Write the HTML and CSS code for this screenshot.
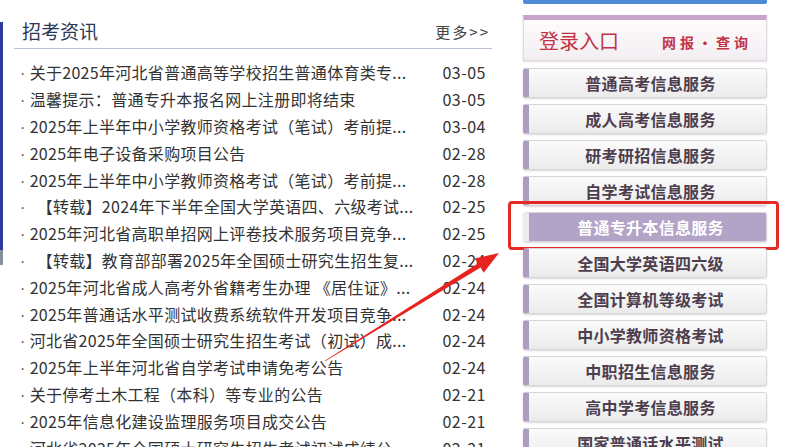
FILE: index.html
```html
<!DOCTYPE html>
<html lang="zh-CN">
<head>
<meta charset="UTF-8">
<meta name="viewport" content="width=device-width, initial-scale=1.0">
<title>招考资讯</title>
<link rel="stylesheet" href="styles.css">
</head>
<body>
<div class="page">
    <div class="edge"></div>

    <!-- 招考资讯 list -->
    <div class="news">
        <div class="news-head">
            <h2>招考资讯</h2>
            <a class="more" href="#">更多&gt;&gt;</a>
        </div>
        <ul class="news-list">
            <li><span class="title"><i>·</i>关于2025年河北省普通高等学校招生普通体育类专...</span><span class="date">03-05</span></li>
            <li><span class="title"><i>·</i>温馨提示：普通专升本报名网上注册即将结束</span><span class="date">03-05</span></li>
            <li><span class="title"><i>·</i>2025年上半年中小学教师资格考试（笔试）考前提...</span><span class="date">03-04</span></li>
            <li><span class="title"><i>·</i>2025年电子设备采购项目公告</span><span class="date">02-28</span></li>
            <li><span class="title"><i>·</i>2025年上半年中小学教师资格考试（笔试）考前提...</span><span class="date">02-28</span></li>
            <li><span class="title"><i>·</i><b>【</b>转载】2024年下半年全国大学英语四、六级考试...</span><span class="date">02-25</span></li>
            <li><span class="title"><i>·</i>2025年河北省高职单招网上评卷技术服务项目竞争...</span><span class="date">02-25</span></li>
            <li><span class="title"><i>·</i><b>【</b>转载】教育部部署2025年全国硕士研究生招生复...</span><span class="date">02-24</span></li>
            <li><span class="title"><i>·</i>2025年河北省成人高考外省籍考生办理 《居住证》...</span><span class="date">02-24</span></li>
            <li><span class="title"><i>·</i>2025年普通话水平测试收费系统软件开发项目竞争...</span><span class="date">02-24</span></li>
            <li><span class="title"><i>·</i>河北省2025年全国硕士研究生招生考试（初试）成...</span><span class="date">02-24</span></li>
            <li><span class="title"><i>·</i>2025年上半年河北省自学考试申请免考公告</span><span class="date">02-24</span></li>
            <li><span class="title"><i>·</i>关于停考土木工程（本科）等专业的公告</span><span class="date">02-21</span></li>
            <li><span class="title"><i>·</i>2025年信息化建设监理服务项目成交公告</span><span class="date">02-21</span></li>
            <li><span class="title"><i>·</i>河北省2025年全国硕士研究生招生考试初试成绩公...</span><span class="date">02-21</span></li>
        </ul>
    </div>

    <!-- 登录入口 -->
    <div class="side">
        <div class="top-bar"></div>
        <div class="login">
            <span class="login-title">登录入口</span>
            <span class="login-sub">网报·查询</span>
        </div>
        <a class="svc" href="#">普通高考信息服务</a>
        <a class="svc" href="#">成人高考信息服务</a>
        <a class="svc" href="#">研考研招信息服务</a>
        <a class="svc" href="#">自学考试信息服务</a>
        <a class="svc active" href="#">普通专升本信息服务</a>
        <a class="svc" href="#">全国大学英语四六级</a>
        <a class="svc" href="#">全国计算机等级考试</a>
        <a class="svc" href="#">中小学教师资格考试</a>
        <a class="svc" href="#">中职招生信息服务</a>
        <a class="svc" href="#">高中学考信息服务</a>
        <a class="svc" href="#">国家普通话水平测试</a>
    </div>

    <!-- annotation arrow -->
    <svg class="arrow" width="800" height="447" viewBox="0 0 800 447">
        <polygon fill="#e8231e" points="324.8,360.7 477.8,263.6 474.6,258.6 499,253 483.6,272.8 480.6,267.6 325.2,361.3"/>
    </svg>
</div>
</body>
</html>
```

FILE: styles.css
```css
body {
    margin: 0;
    padding: 0;
    background: #fff;
    font-family: "Noto Sans CJK SC", "Microsoft YaHei", sans-serif;
    overflow: hidden;
}
.page {
    position: relative;
    display: flex;
    align-items: flex-start;
    width: 800px;
    height: 447px;
}
.edge {
    width: 3px;
    height: 243px;
    margin-top: 22px;
    background: linear-gradient(#2b3c9e 0, #2b3c9e 228px, #8a8f9c 228px);
}
.news {
    width: 478px;
    margin-left: 11px;
}
.news-head {
    display: flex;
    justify-content: space-between;
    align-items: flex-end;
    height: 44px;
    padding: 0 2px 4px 8px;
    border-bottom: 1px solid #b9c3d6;
}
.news-head h2 {
    margin: 0;
    font-size: 19px;
    line-height: 26px;
    font-weight: 400;
    color: #2c3858;
}
.more {
    font-size: 15px;
    line-height: 24px;
    color: #444;
    text-decoration: none;
    letter-spacing: 2px;
}
.news-list {
    list-style: none;
    margin: 0;
    padding: 10px 6px 0 6px;
}
.news-list li {
    display: flex;
    justify-content: space-between;
    align-items: center;
    height: 26.8px;
    font-size: 16px;
    color: #333;
    white-space: nowrap;
}
.title {
    letter-spacing: 0.3px;
    text-spacing-trim: space-all;
}
.title i {
    font-style: normal;
    font-family: "Liberation Sans", sans-serif;
    color: #555;
    margin-right: 4px;
}
.title b {
    font-weight: 400;
    margin-left: 7px;
}
.date {
    font-size: 16px;
    color: #333;
    letter-spacing: 0.5px;
}
.side {
    display: flex;
    flex-direction: column;
    width: 244px;
    margin-left: 31px;
}
.top-bar {
    height: 4px;
    background: #4d8bd9;
    border-radius: 0 0 2px 2px;
}
.login {
    display: flex;
    justify-content: space-between;
    align-items: center;
    height: 40px;
    margin-top: 11px;
    padding: 0 14px 0 15px;
    border: 1px solid #e2d8e2;
    border-top: 5px solid #c9a3c9;
    background: linear-gradient(#fdfbfc, #f3eef2);
    box-shadow: 0 1px 2px rgba(0, 0, 0, 0.12);
}
.login-title {
    font-size: 20px;
    color: #c13446;
}
.login-sub {
    font-size: 14px;
    font-weight: 700;
    color: #c13446;
    letter-spacing: 4px;
    margin-top: 3px;
}
.svc {
    position: relative;
    display: block;
    height: 28px;
    line-height: 28px;
    margin-top: 6px;
    padding-left: 6px;
    text-align: center;
    font-size: 16px;
    font-weight: 700;
    letter-spacing: 0.3px;
    color: #4d3e4e;
    text-decoration: none;
    background: linear-gradient(#fbfbfb, #ebebeb);
    border: 1px solid #d9d6d9;
    border-left: 6px solid #ad9cc0;
    border-radius: 3px;
    box-shadow: 0 1px 2px rgba(0, 0, 0, 0.15);
}
.login + .svc {
    margin-top: 7px;
}
.svc.active {
    background: #b2a4c7;
    color: #fff;
    border-left: 6px solid #ececec;
}
.svc.active::after {
    content: "";
    position: absolute;
    top: -12px;
    bottom: -9px;
    left: -21px;
    right: -13px;
    border: 3px solid #e42a24;
    border-radius: 4px;
}
.arrow {
    position: absolute;
    top: 0;
    left: 0;
    pointer-events: none;
}
```
